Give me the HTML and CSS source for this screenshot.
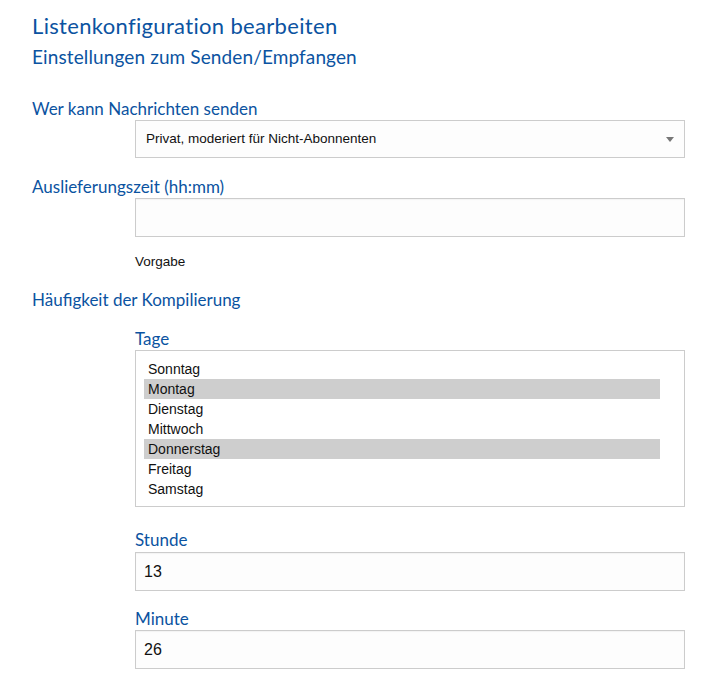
FILE: index.html
```html
<!DOCTYPE html>
<html lang="de">
<head>
<meta charset="utf-8">
<title>Listenkonfiguration bearbeiten</title>
<link rel="stylesheet" href="styles.css">
</head>
<body>
<div class="page">
  <h1 class="title">Listenkonfiguration bearbeiten</h1>
  <h2 class="subtitle">Einstellungen zum Senden/Empfangen</h2>

  <div class="field first">
    <div class="label">Wer kann Nachrichten senden</div>
    <div class="control select-wrap">
      <div class="select">Privat, moderiert für Nicht-Abonnenten</div>
      <svg class="arrow" width="8" height="5" viewBox="0 0 8 5"><path d="M0 0H8L4 5Z" fill="#777"/></svg>
    </div>
  </div>

  <div class="field">
    <div class="label">Auslieferungszeit (hh:mm)</div>
    <div class="control"><input class="input" type="text" value=""></div>
    <div class="control hint">Vorgabe</div>
  </div>

  <div class="field group">
    <div class="label">Häufigkeit der Kompilierung</div>
    <div class="control sub days">
      <div class="label sublabel">Tage</div>
      <div class="listbox">
        <div class="opt">Sonntag</div>
        <div class="opt sel">Montag</div>
        <div class="opt">Dienstag</div>
        <div class="opt">Mittwoch</div>
        <div class="opt sel">Donnerstag</div>
        <div class="opt">Freitag</div>
        <div class="opt">Samstag</div>
      </div>
    </div>
    <div class="control sub hour">
      <div class="label sublabel">Stunde</div>
      <input class="input" type="text" value="13">
    </div>
    <div class="control sub minute">
      <div class="label sublabel">Minute</div>
      <input class="input" type="text" value="26">
    </div>
  </div>
</div>
</body>
</html>
```
FILE: styles.css
```css
html, body {
  margin: 0;
  padding: 0;
  background: #ffffff;
}
.page {
  padding: 11px 31px 0 32px;
  font-family: "Liberation Sans", Arial, sans-serif;
  color: #111;
}
.title, .subtitle, .label {
  font-family: "Lato", "Open Sans", sans-serif;
  font-weight: 400;
  color: #0b53a1;
  margin: 0;
}
.title {
  font-size: 22px;
  line-height: 30px;
  letter-spacing: 0.33px;
}
.subtitle {
  font-size: 19px;
  line-height: 24px;
  margin-top: 4px;
  letter-spacing: 0.12px;
}
.label {
  font-size: 17px;
  line-height: 22px;
}
.control {
  margin-left: 103px;
}
.select-wrap {
  position: relative;
}
.select {
  box-sizing: border-box;
  height: 38px;
  border: 1px solid #cccccc;
  background: #fdfdfd;
  font-size: 13.5px;
  line-height: 36px;
  padding: 0 30px 0 10px;
}
.arrow {
  position: absolute;
  right: 11px;
  top: 17px;
}
.field {
  margin-top: 18px;
}
.field.first {
  margin-top: 29px;
}
.input {
  display: block;
  box-sizing: border-box;
  width: 100%;
  height: 39px;
  margin: 0;
  border: 1px solid #cccccc;
  border-radius: 0;
  background: #fdfdfd;
  box-shadow: inset 0 1px 1px rgba(0,0,0,0.04);
  font-family: "Liberation Sans", Arial, sans-serif;
  font-size: 16px;
  color: #111;
  padding: 0 8px;
  outline: none;
}
.hint {
  font-size: 13.5px;
  line-height: 18px;
  margin-top: 16px;
}
.field.group {
  margin-top: 18px;
}
.sub.days {
  margin-top: 17px;
}
.sub.hour {
  margin-top: 22px;
}
.sub.hour .sublabel {
  margin-bottom: 1px;
}
.sub.minute {
  margin-top: 17px;
}
.sublabel {
  font-size: 17px;
}
.listbox {
  box-sizing: border-box;
  height: 157px;
  border: 1px solid #cccccc;
  background: #ffffff;
  padding: 8px 24px 8px 8px;
}
.opt {
  height: 20px;
  line-height: 20px;
  padding-left: 4px;
  font-size: 14px;
}
.opt.sel {
  background: #cecece;
}
```
